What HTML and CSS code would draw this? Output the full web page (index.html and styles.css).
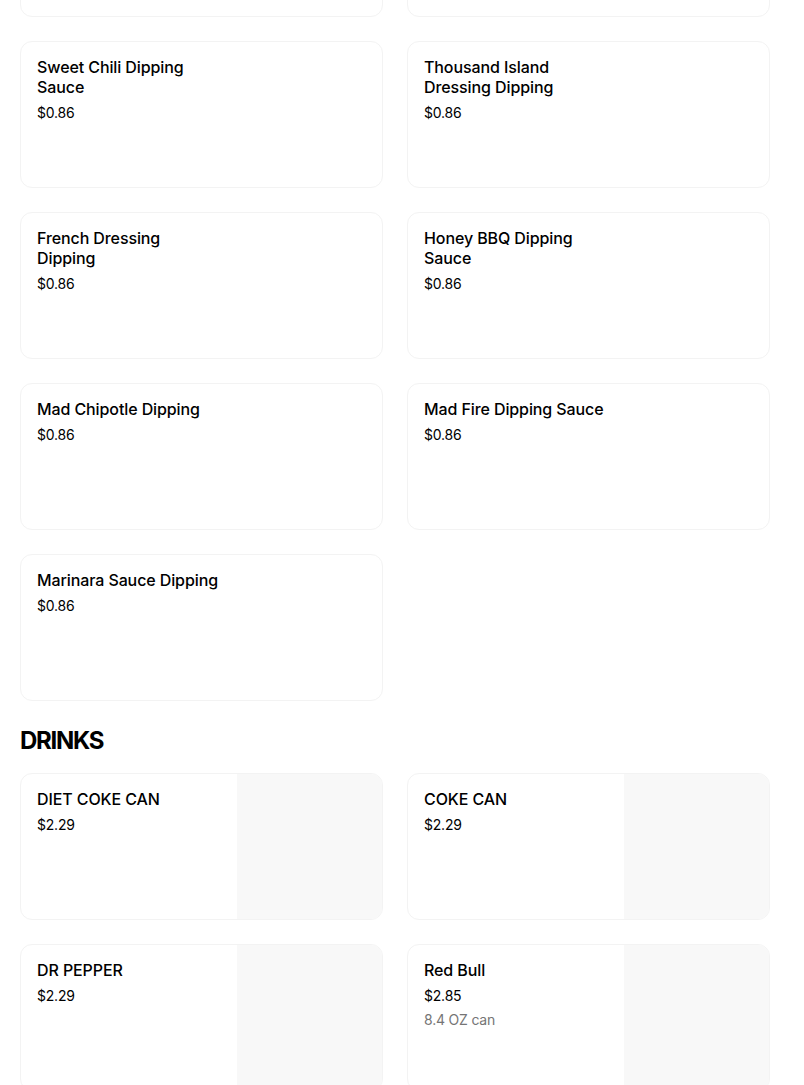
FILE: index.html
```html
<!DOCTYPE html>
<html lang="en">
<head>
<meta charset="UTF-8" />
<meta name="viewport" content="width=device-width, initial-scale=1" />
<title>Menu</title>
<link rel="stylesheet" href="styles.css">
</head>
<body>

<main class="menu">
  <section class="section section-scrolled">
    <div class="grid">
      <!-- 上の行はスクロールで見切れている -->
      <div class="item">
        <div class="item-info"></div>
        <div class="item-thumb empty"></div>
      </div>
      <div class="item">
        <div class="item-info"></div>
        <div class="item-thumb empty"></div>
      </div>
      <div class="item">
        <div class="item-info">
          <div class="item-title">Sweet Chili Dipping Sauce</div>
          <div class="item-price">$0.86</div>
        </div>
        <div class="item-thumb empty"></div>
      </div>
      <div class="item">
        <div class="item-info">
          <div class="item-title">Thousand Island Dressing Dipping</div>
          <div class="item-price">$0.86</div>
        </div>
        <div class="item-thumb empty"></div>
      </div>
      <div class="item">
        <div class="item-info">
          <div class="item-title">French Dressing Dipping</div>
          <div class="item-price">$0.86</div>
        </div>
        <div class="item-thumb empty"></div>
      </div>
      <div class="item">
        <div class="item-info">
          <div class="item-title">Honey BBQ Dipping Sauce</div>
          <div class="item-price">$0.86</div>
        </div>
        <div class="item-thumb empty"></div>
      </div>
      <div class="item">
        <div class="item-info">
          <div class="item-title">Mad Chipotle Dipping</div>
          <div class="item-price">$0.86</div>
        </div>
        <div class="item-thumb empty"></div>
      </div>
      <div class="item">
        <div class="item-info">
          <div class="item-title">Mad Fire Dipping Sauce</div>
          <div class="item-price">$0.86</div>
        </div>
        <div class="item-thumb empty"></div>
      </div>
      <div class="item">
        <div class="item-info">
          <div class="item-title">Marinara Sauce Dipping</div>
          <div class="item-price">$0.86</div>
        </div>
        <div class="item-thumb empty"></div>
      </div>
    </div>
  </section>

  <section class="section">
    <h2 class="section-title">DRINKS</h2>
    <div class="grid">
      <div class="item">
        <div class="item-info">
          <div class="item-title">DIET COKE CAN</div>
          <div class="item-price">$2.29</div>
        </div>
        <div class="item-thumb"></div>
      </div>
      <div class="item">
        <div class="item-info">
          <div class="item-title">COKE CAN</div>
          <div class="item-price">$2.29</div>
        </div>
        <div class="item-thumb"></div>
      </div>
      <div class="item">
        <div class="item-info">
          <div class="item-title">DR PEPPER</div>
          <div class="item-price">$2.29</div>
        </div>
        <div class="item-thumb"></div>
      </div>
      <div class="item">
        <div class="item-info">
          <div class="item-title">Red Bull</div>
          <div class="item-price">$2.85</div>
          <div class="item-desc">8.4 OZ can</div>
        </div>
        <div class="item-thumb"></div>
      </div>
    </div>
  </section>
</main>

</body>
</html>
```

FILE: styles.css
```css
body {
  margin: 0;
  background-color: #fff;
  color: #000;
  font-family: Inter, "Liberation Sans", Arial, sans-serif;
}

.menu {
  padding: 0 34px 0 20px;
}

/* ページはスクロール途中の状態 */
.section-scrolled {
  margin-top: -130px;
}

.section-title {
  margin: 24px 0 16px;
  font-size: 24px;
  line-height: 32px;
  font-weight: 700;
  letter-spacing: -1.3px;
}

.grid {
  display: grid;
  grid-template-columns: 1fr 1fr;
  gap: 24px;
}

/* 商品カード */
.item {
  display: flex;
  height: 147px;
  box-sizing: border-box;
  border: 1px solid #f3f3f3;
  border-radius: 12px;
  overflow: hidden;
}
.item-info {
  flex: 1;
  padding: 15px 16px 16px;
  min-width: 0;
}
.item-title {
  font-size: 16px;
  line-height: 20px;
  font-weight: 500;
  letter-spacing: -0.1px;
  color: #000;
}
.item-price {
  margin-top: 6px;
  font-size: 14px;
  line-height: 20px;
  letter-spacing: -0.2px;
  color: #000;
}
.item-desc {
  margin-top: 4px;
  font-size: 14px;
  line-height: 20px;
  letter-spacing: -0.2px;
  color: #757575;
}
.item-thumb {
  flex: 0 0 145px;
  background-color: #f8f8f8;
}
.item-thumb.empty {
  background-color: transparent;
}
```
